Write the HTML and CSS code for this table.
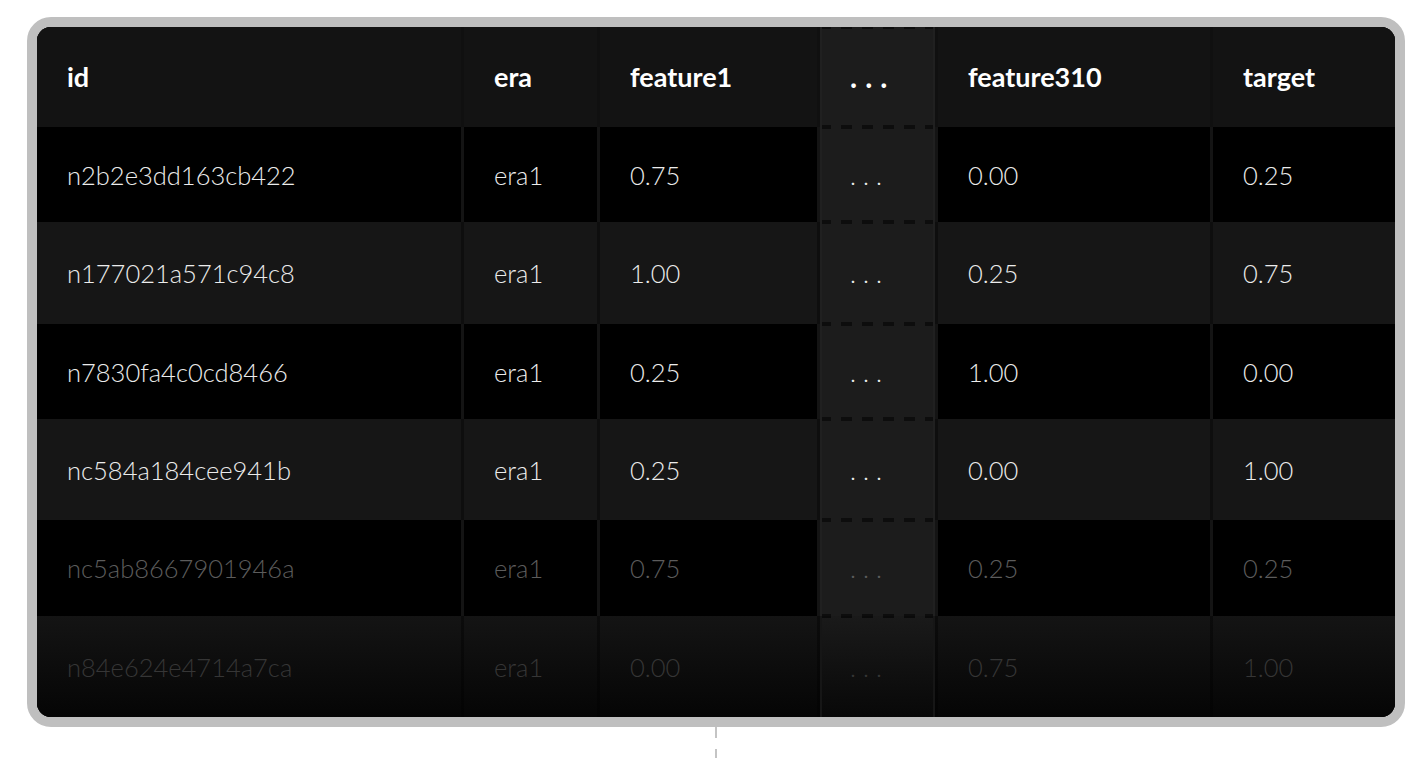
FILE: index.html
```html
<!DOCTYPE html>
<html lang="en">
<head>
<meta charset="utf-8">
<title>Dataset table</title>
<link rel="stylesheet" href="styles.css">
</head>
<body>
<div class="page">
  <div class="card">
    <div class="row head">
      <div class="cell">id</div>
      <div class="cell">era</div>
      <div class="cell">feature1</div>
      <div class="cell dots">...</div>
      <div class="cell">feature310</div>
      <div class="cell">target</div>
    </div>
    <div class="row dark h95">
      <div class="cell">n2b2e3dd163cb422</div>
      <div class="cell">era1</div>
      <div class="cell">0.75</div>
      <div class="cell dots">...</div>
      <div class="cell">0.00</div>
      <div class="cell">0.25</div>
    </div>
    <div class="row light h102">
      <div class="cell">n177021a571c94c8</div>
      <div class="cell">era1</div>
      <div class="cell">1.00</div>
      <div class="cell dots">...</div>
      <div class="cell">0.25</div>
      <div class="cell">0.75</div>
    </div>
    <div class="row dark h95">
      <div class="cell">n7830fa4c0cd8466</div>
      <div class="cell">era1</div>
      <div class="cell">0.25</div>
      <div class="cell dots">...</div>
      <div class="cell">1.00</div>
      <div class="cell">0.00</div>
    </div>
    <div class="row light h101">
      <div class="cell">nc584a184cee941b</div>
      <div class="cell">era1</div>
      <div class="cell">0.25</div>
      <div class="cell dots">...</div>
      <div class="cell">0.00</div>
      <div class="cell">1.00</div>
    </div>
    <div class="row dark h96 dim">
      <div class="cell">nc5ab8667901946a</div>
      <div class="cell">era1</div>
      <div class="cell">0.75</div>
      <div class="cell dots">...</div>
      <div class="cell">0.25</div>
      <div class="cell">0.25</div>
    </div>
    <div class="row fade h101">
      <div class="cell">n84e624e4714a7ca</div>
      <div class="cell">era1</div>
      <div class="cell">0.00</div>
      <div class="cell dots">...</div>
      <div class="cell">0.75</div>
      <div class="cell">1.00</div>
    </div>
  </div>
  <div class="connector"></div>
</div>
</body>
</html>
```

FILE: styles.css
```css
* { box-sizing: border-box; }
html, body { margin: 0; padding: 0; background: #ffffff; }
body { width: 1420px; height: 758px; overflow: hidden; font-family: "Lato", "Noto Sans", sans-serif; }

.page {
  padding: 17px 15px 0 27px;
  display: flex;
  flex-direction: column;
  align-items: center;
}

.card {
  width: 1378px;
  border: 10px solid #bfbfbf;
  border-radius: 24px;
  overflow: hidden;
  background: #000;
  display: flex;
  flex-direction: column;
}

.row {
  display: grid;
  grid-template-columns: 424px 133px 217px 115px 272px 183px;
  column-gap: 3px;
}

.cell {
  display: flex;
  align-items: center;
  padding-left: 30px;
  white-space: nowrap;
}

.head { height: 100px; background: #101010; }
.head .cell {
  background: #131313;
  color: #ffffff;
  font-weight: 700;
  font-size: 27px;
  padding-bottom: 2px;
}

.h95 { height: 95px; }
.h96 { height: 96px; }
.h101 { height: 101px; }
.h102 { height: 102px; }

.dark { background: #141414; }
.dark .cell { background: #000000; }
.light { background: #0e0e0e; }
.light .cell { background: #161616; }

.dark .cell, .light .cell, .fade .cell {
  color: #ececec;
  font-weight: 300;
  font-size: 25.5px;
}

.cell.dots {
  background-color: #1c1c1c;
  background-image:
    repeating-linear-gradient(90deg, #0d0d0d 0 11px, transparent 11px 21px),
    repeating-linear-gradient(90deg, #0d0d0d 0 11px, transparent 11px 21px);
  background-size: 100% 2px, 100% 2px;
  background-position: 0 0, 0 100%;
  background-repeat: no-repeat;
  box-shadow: inset 2px 0 0 #202020, inset -2px 0 0 #202020;
  letter-spacing: 7px;
}
.dark .cell.dots, .light .cell.dots { background-color: #1c1c1c; }
.head .cell.dots { background-color: #1c1c1c; letter-spacing: 8px; font-size: 30px; }

.dim .cell { color: #5c5c5c; }
.dim .cell.dots { color: #5c5c5c; }

.fade { background: linear-gradient(#0c0c0c, #030303); }
.fade .cell {
  background: linear-gradient(#141414, #050505);
  color: #363636;
}
.fade .cell.dots {
  background-color: transparent;
  background-image:
    repeating-linear-gradient(90deg, #0a0a0a 0 11px, transparent 11px 21px),
    linear-gradient(#1a1a1a, #080808);
  background-size: 100% 2px, 100% 100%;
  background-position: 0 0, 0 0;
  background-repeat: no-repeat;
  box-shadow: inset 2px 0 0 #161616, inset -2px 0 0 #161616;
  color: #363636;
}

.connector {
  width: 2px;
  height: 32px;
  background: repeating-linear-gradient(180deg, #c4c4c4 0 11px, transparent 11px 22px);
}
```
